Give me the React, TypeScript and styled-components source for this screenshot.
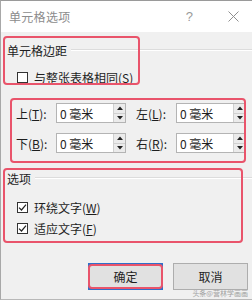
import React from "react";
import styled, { createGlobalStyle } from "styled-components";

const Global = createGlobalStyle`
  html, body { margin: 0; padding: 0; background: #ffffff; }
  body { font-family: "Noto Sans CJK SC", "Noto Sans", sans-serif; }
  * { box-sizing: border-box; }
`;

const RED = "#e9546b";

const Window = styled.div`
  position: relative;
  width: 252px;
  height: 300px;
  border-top: 1px solid #9a9a9a;
  border-left: 1px solid #a8a8a8;
  border-bottom: 1px solid #b8b8b8;
  display: flex;
  flex-direction: column;
  overflow: hidden;
`;

const TitleBar = styled.div`
  height: 31px;
  background: #ffffff;
  display: flex;
  align-items: center;
  padding-left: 8px;
  padding-right: 13px;
  flex-shrink: 0;
`;

const TitleText = styled.div`
  flex: 1;
  font-size: 12px;
  color: #8c8c8c;
  letter-spacing: 0.3px;
`;

const Help = styled.div`
  font-family: "Liberation Sans", sans-serif;
  font-size: 13px;
  color: #9a9a9a;
  margin-right: 35px;
`;

const Body = styled.div`
  flex: 1;
  background: #f0f0f0;
  padding-top: 10px;
  display: flex;
  flex-direction: column;
  position: relative;
`;

const Group = styled.div`
  position: relative;
  display: flex;
  flex-direction: column;
`;

const Highlight = styled.div<{ $t: number; $l: number; $w: number; $h: number }>`
  position: absolute;
  top: ${(p) => p.$t}px;
  left: ${(p) => p.$l}px;
  width: ${(p) => p.$w}px;
  height: ${(p) => p.$h}px;
  border: 2.5px solid ${RED};
  border-radius: 4px;
  pointer-events: none;
`;

const Heading = styled.div`
  height: 16px;
  display: flex;
  align-items: center;
  padding-left: 6px;
  font-size: 12px;
  color: #1e1e1e;
`;

const Rule = styled.div`
  flex: 1;
  height: 2px;
  margin-left: 4px;
  border-top: 1px solid #dcdcdc;
  border-bottom: 1px solid #ffffff;
`;

const CheckRow = styled.label<{ $mt: number }>`
  height: 16px;
  margin-top: ${(p) => p.$mt}px;
  padding-left: 16px;
  display: flex;
  align-items: center;
  font-size: 12px;
  color: #1e1e1e;
`;

const Box = styled.span`
  width: 11px;
  height: 11px;
  border: 1px solid #333333;
  background: #ffffff;
  margin-right: 6px;
  display: flex;
  align-items: center;
  justify-content: center;
`;

const Grid = styled.div`
  margin-top: 18px;
  padding-left: 15px;
  display: flex;
  flex-direction: column;
  gap: 10px;
`;

const FieldRow = styled.div`
  display: flex;
  gap: 10px;
`;

const Field = styled.div`
  display: flex;
  align-items: center;
`;

const FieldLabel = styled.div`
  width: 40px;
  font-size: 12px;
  color: #1e1e1e;
`;

const Input = styled.div`
  width: 70px;
  height: 20px;
  border: 1px solid #b4b4b4;
  background: #ffffff;
  display: flex;
  align-items: stretch;
`;

const InputText = styled.div`
  flex: 1;
  font-size: 12px;
  color: #1e1e1e;
  padding-left: 3px;
  display: flex;
  align-items: center;
`;

const Spin = styled.div`
  width: 12px;
  display: flex;
  flex-direction: column;
  border-left: 1px solid #d0d0d0;
`;

const SpinBtn = styled.div<{ $top?: boolean }>`
  flex: 1;
  background: #ebebeb;
  border-bottom: ${(p) => (p.$top ? "1px solid #d0d0d0" : "none")};
  display: flex;
  align-items: center;
  justify-content: center;
`;

const Options = styled(Group)`
  margin-top: 17px;
`;

const Buttons = styled.div`
  margin-top: 27px;
  display: flex;
  justify-content: flex-end;
  gap: 10px;
  padding-right: 4px;
  position: relative;
`;

const Button = styled.div<{ $primary?: boolean }>`
  width: 75px;
  height: 27px;
  background: #e1e1e1;
  border: ${(p) => (p.$primary ? "2px solid #2f6fc9" : "1px solid #adadad")};
  display: flex;
  align-items: center;
  justify-content: center;
  font-size: 12px;
  color: #1e1e1e;
`;

const Watermark = styled.div`
  position: absolute;
  right: 4px;
  bottom: 1px;
  font-size: 7px;
  color: #8e8e8e;
  opacity: 0.8;
  white-space: nowrap;
`;

const Close = () => (
  <svg width="11" height="11" viewBox="0 0 11 11">
    <path d="M0.5 0.5 L10.5 10.5 M10.5 0.5 L0.5 10.5" stroke="#8f8f8f" strokeWidth="1" />
  </svg>
);

const Tick = () => (
  <svg width="9" height="9" viewBox="0 0 9 9">
    <path d="M1 4.6 L3.5 7 L8 1.6" fill="none" stroke="#222" strokeWidth="1.2" />
  </svg>
);

const Up = () => (
  <svg width="6" height="4" viewBox="0 0 6 4">
    <path d="M0 4 L3 0.5 L6 4 Z" fill="#222" />
  </svg>
);

const Down = () => (
  <svg width="6" height="4" viewBox="0 0 6 4">
    <path d="M0 0 L3 3.5 L6 0 Z" fill="#222" />
  </svg>
);

const Spinner = ({ label, k }: { label: string; k: string }) => (
  <Field>
    <FieldLabel>
      {label}(<u>{k}</u>):
    </FieldLabel>
    <Input>
      <InputText>0 毫米</InputText>
      <Spin>
        <SpinBtn $top>
          <Up />
        </SpinBtn>
        <SpinBtn>
          <Down />
        </SpinBtn>
      </Spin>
    </Input>
  </Field>
);

export default function App() {
  return (
    <>
      <Global />
      <Window>
        <TitleBar>
          <TitleText>单元格选项</TitleText>
          <Help>?</Help>
          <Close />
        </TitleBar>
        <Body>
          <Group>
            <Heading>
              单元格边距
              <Rule />
            </Heading>
            <CheckRow $mt={11}>
              <Box />
              与整张表格相同(<u>S</u>)
            </CheckRow>
            <Highlight $t={-6} $l={2} $w={137} $h={49} />
          </Group>
          <Grid>
            <FieldRow>
              <Spinner label="上" k="T" />
              <Spinner label="左" k="L" />
            </FieldRow>
            <FieldRow>
              <Spinner label="下" k="B" />
              <Spinner label="右" k="R" />
            </FieldRow>
          </Grid>
          <Options>
            <Heading>
              选项
              <Rule />
            </Heading>
            <CheckRow $mt={13}>
              <Box>
                <Tick />
              </Box>
              环绕文字(<u>W</u>)
            </CheckRow>
            <CheckRow $mt={5}>
              <Box>
                <Tick />
              </Box>
              适应文字(<u>F</u>)
            </CheckRow>
            <Highlight $t={-2} $l={2} $w={240} $h={75} />
          </Options>
          <Buttons>
            <Button $primary>确定</Button>
            <Button>取消</Button>
            <Highlight $t={1} $l={87} $w={75} $h={25} />
          </Buttons>
          <Highlight $t={66} $l={9} $w={236} $h={65} />
          <Watermark>头条@营林学画画</Watermark>
        </Body>
      </Window>
    </>
  );
}
